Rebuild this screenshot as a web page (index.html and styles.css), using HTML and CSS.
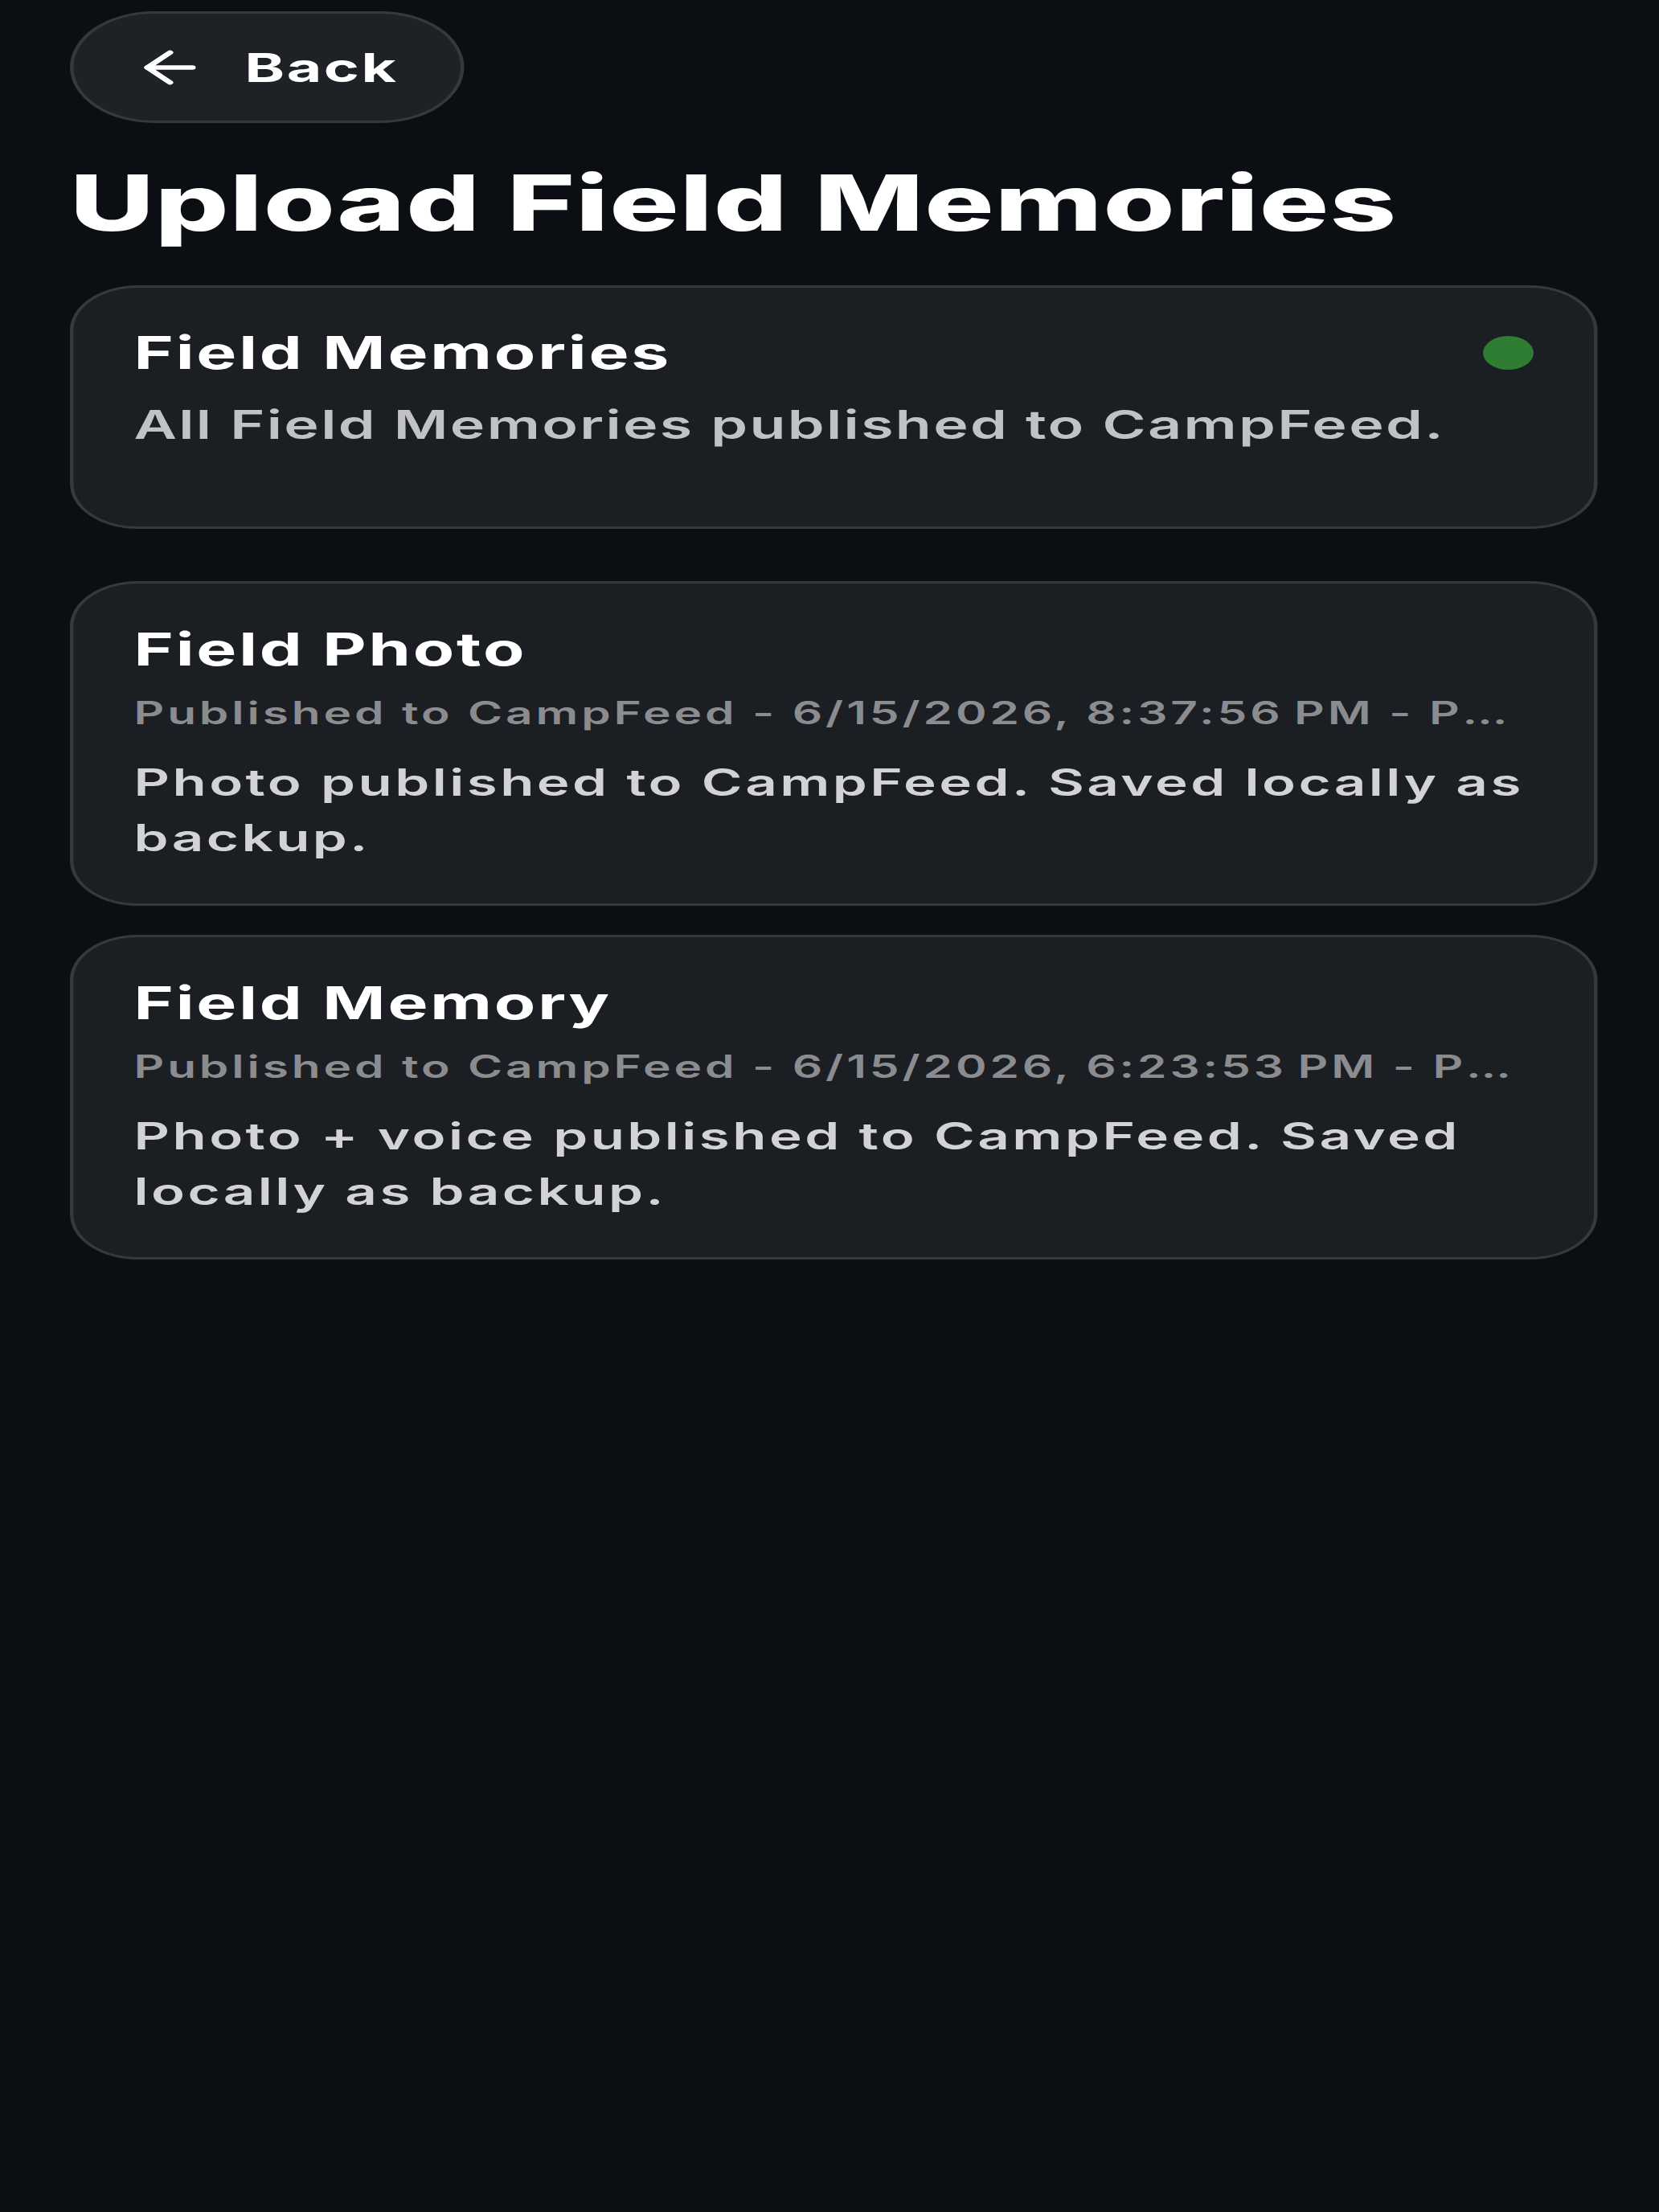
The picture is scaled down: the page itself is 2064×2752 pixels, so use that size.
FILE: index.html
```html
<!DOCTYPE html>
<html lang="en">
<head>
  <meta charset="UTF-8" />
  <meta name="viewport" content="width=device-width, initial-scale=1" />
  <title>Upload Field Memories</title>
  <link rel="stylesheet" href="styles.css">
</head>
<body>
  <div class="screen">
    <button class="back-btn" type="button">
      <svg class="back-icon" viewBox="0 0 24 24" fill="none" stroke="currentColor" stroke-width="2" stroke-linecap="round" stroke-linejoin="round">
        <path d="M19 12H5" />
        <path d="M12 19l-7-7 7-7" />
      </svg>
      <span>Back</span>
    </button>

    <h1 class="page-title">Upload Field Memories</h1>

    <!-- sync summary -->
    <section class="card summary">
      <div class="card-head">
        <h2 class="card-title">Field Memories</h2>
        <span class="status-dot"></span>
      </div>
      <p class="summary-text">All Field Memories published to CampFeed.</p>
    </section>

    <div class="memory-list">
      <article class="card memory">
        <h2 class="card-title">Field Photo</h2>
        <p class="memory-meta">Published to CampFeed - 6/15/2026, 8:37:56&#8239;PM - Photo</p>
        <p class="memory-body">Photo published to CampFeed. Saved locally as backup.</p>
      </article>
      <article class="card memory">
        <h2 class="card-title">Field Memory</h2>
        <p class="memory-meta">Published to CampFeed - 6/15/2026, 6:23:53&#8239;PM - Photo + voice</p>
        <p class="memory-body">Photo + voice published to CampFeed. Saved locally as backup.</p>
      </article>
    </div>
  </div>
</body>
</html>
```

FILE: styles.css
```css
html, body {
  margin: 0;
  background: #0b0e12;
}
body {
  font-family: Inter, "Noto Sans", sans-serif;
  color: #ffffff;
  min-height: 2752px;
  overflow: hidden;
}
.screen {
  width: 1376px;
  box-sizing: border-box;
  padding: 14px 51px 0 58px;
  transform: scaleX(1.5);
  transform-origin: 0 0;
}
.back-btn {
  display: flex;
  align-items: center;
  gap: 30px;
  width: 327px;
  height: 139px;
  box-sizing: border-box;
  padding: 0 0 0 48px;
  border: 3px solid #35383c;
  border-radius: 70px;
  background: #1e2125;
  color: #ffffff;
  font-family: inherit;
  font-size: 50px;
  font-weight: 700;
  letter-spacing: 1.7px;
  cursor: pointer;
}
.back-icon {
  width: 64px;
  height: 64px;
  flex: none;
}
.page-title {
  margin: 42px 0 45px;
  font-size: 96px;
  line-height: 115px;
  font-weight: 800;
  letter-spacing: 0.75px;
}
.card {
  box-sizing: border-box;
  border: 3px solid #35383c;
  border-radius: 56px;
  background: #1b1e22;
  padding: 0 50px;
}
.card-title {
  margin: 0;
  font-size: 56px;
  line-height: 64px;
  font-weight: 700;
  letter-spacing: 1.9px;
}
.summary {
  height: 303px;
  padding-top: 49px;
}
.card-head {
  display: flex;
  align-items: center;
  justify-content: space-between;
}
.status-dot {
  width: 42px;
  height: 42px;
  border-radius: 50%;
  background: #2e7d32;
}
.summary-text {
  margin: 29px 0 0;
  font-size: 49px;
  line-height: 58px;
  font-weight: 600;
  letter-spacing: 1.55px;
  color: #c1c2c5;
}
.memory-list {
  display: flex;
  flex-direction: column;
  gap: 36px;
  margin-top: 65px;
}
.memory {
  height: 404px;
  padding-top: 50px;
}
.memory-meta {
  margin: 25px 0 0;
  font-size: 39px;
  line-height: 44px;
  font-weight: 600;
  letter-spacing: 2.6px;
  color: #8b8c8f;
  white-space: nowrap;
  overflow: hidden;
  text-overflow: ellipsis;
}
.memory-body {
  margin: 30px 0 0;
  font-size: 46px;
  line-height: 69px;
  font-weight: 600;
  letter-spacing: 2.3px;
  color: #d3d3d5;
}
```
